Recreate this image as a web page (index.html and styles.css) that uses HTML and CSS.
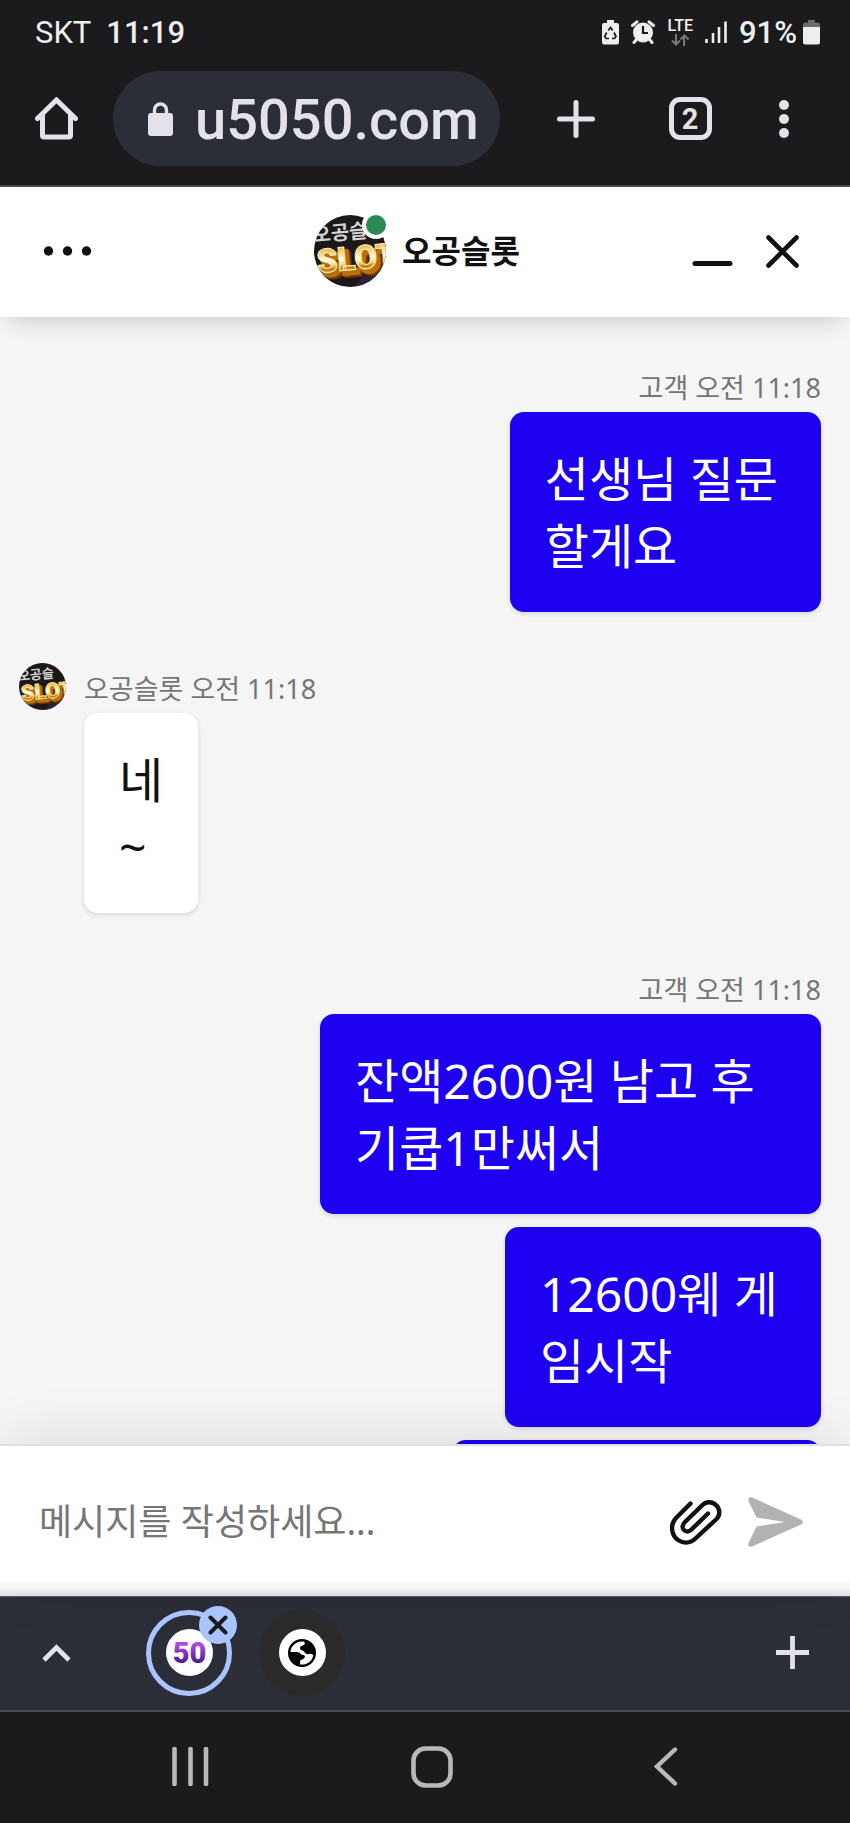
FILE: index.html
```html
<!DOCTYPE html>
<html lang="ko">
<head>
<meta charset="utf-8">
<meta name="viewport" content="width=device-width, initial-scale=1">
<title>오공슬롯</title>
<link rel="stylesheet" href="styles.css">
</head>
<body>
<div class="screen">
  <header class="status">
    <div class="status-left"><span>SKT</span><span class="status-strong">11:19</span></div>
    <div class="status-right">
      <svg width="17" height="25" viewBox="0 0 17 25" aria-hidden="true">
        <path d="M5 0h7v3h3q2 0 2 2v17q0 2.500-2 2.500H2q-2 0-2-2.500V5q0-2 2-2h3z" fill="#eee"/>
        <path d="M6.300 10.500 8.500 7.500l2.200 3M12 12.500l2 4-1.500 2H10M7 18.500H4l-1.300-2 2-4" fill="none" stroke="#1b1b1d" stroke-width="1.700"/>
      </svg>
      <svg width="24" height="24" viewBox="0 0 24 24" aria-hidden="true">
        <circle cx="12" cy="12.500" r="10" fill="#eee"/>
        <path d="M1.500 5.500 6 1.800M22.500 5.500 18 1.800M5 20l-2 2.500M19 20l2 2.500" stroke="#eee" stroke-width="3" stroke-linecap="round"/>
        <path d="M12 6v7h5" fill="none" stroke="#1b1b1d" stroke-width="2.200"/>
      </svg>
      <div class="network">
        <span class="lte">LTE</span>
        <svg width="18" height="12" viewBox="0 0 18 12" aria-hidden="true">
          <path d="M5 0v10M1 6.500l4 4 4-4M13 12V2M9.500 5.500l4-4 4 4" fill="none" stroke="#77777a" stroke-width="2"/>
        </svg>
      </div>
      <svg width="22" height="24" viewBox="0 0 22 24" aria-hidden="true">
        <path d="M1.500 19v4M8 13v10M14 7v16M20.500 1.500V23" stroke="#eee" stroke-width="2.600"/>
      </svg>
      <span class="status-strong">91%</span>
      <svg class="battery" width="17" height="25" viewBox="0 0 17 25" aria-hidden="true">
        <path d="M5 0h7v2.500h3q2 0 2 2V8H0V4.500q0-2 2-2h3z" fill="#6b6b6d"/>
        <path d="M0 7h17v15q0 2.500-2 2.500H2q-2 0-2-2.500z" fill="#eee"/>
      </svg>
    </div>
  </header>

  <nav class="toolbar" aria-label="브라우저">
    <button class="icon-btn home" aria-label="홈">
      <svg width="43" height="43" viewBox="0 0 43 43" fill="none" stroke="#e4e2e9" stroke-width="5" stroke-linejoin="round" stroke-linecap="round">
        <path d="M7.500 19v19.500q0 1.500 1.500 1.500h25q1.500 0 1.500-1.500V19"/>
        <path d="M2.500 21.500 21.500 3l19 18.500" stroke-linejoin="miter"/>
      </svg>
    </button>
    <div class="address">
      <svg width="25" height="34" viewBox="0 0 25 34" aria-hidden="true">
        <path d="M6.500 13V8a6 6 0 0 1 12 0v5" fill="none" stroke="#e4e2e9" stroke-width="3.400"/>
        <rect y="11" width="25" height="23" rx="3" fill="#e4e2e9"/>
      </svg>
      <input class="address-input" type="text" value="u5050.com" aria-label="주소">
    </div>
    <button class="icon-btn tool" aria-label="새 탭">
      <svg width="38" height="38" viewBox="0 0 38 38" stroke="#e4e2e9" stroke-width="5" stroke-linecap="round"><path d="M19 2.500v33M2.500 19h33"/></svg>
    </button>
    <button class="icon-btn tool" aria-label="탭 2개"><span class="tab-count">2</span></button>
    <button class="icon-btn more" aria-label="더보기">
      <svg width="10" height="38" viewBox="0 0 10 38" fill="#e4e2e9"><circle cx="5" cy="5" r="5"/><circle cx="5" cy="19" r="5"/><circle cx="5" cy="33" r="5"/></svg>
    </button>
  </nav>

  <svg class="defs" width="0" height="0" aria-hidden="true">
    <defs>
      <linearGradient id="gold" x1="0" y1="0" x2="0" y2="1">
        <stop offset=".2" stop-color="#f0b848"/><stop offset=".5" stop-color="#fffbe6"/><stop offset=".62" stop-color="#f9dc8c"/><stop offset=".74" stop-color="#c27a12"/><stop offset=".86" stop-color="#ffe28a"/>
      </linearGradient>
      <clipPath id="disc"><circle cx="36" cy="36" r="36"/></clipPath>
      <symbol id="logo" viewBox="0 0 72 72">
        <g clip-path="url(#disc)">
          <rect width="72" height="72" fill="#1c1719"/>
          <path d="M48 62 72 50v22H40z" fill="#302236"/>
          <g transform="rotate(-5 36 36)">
            <text x="0" y="24" class="logo-small">오공슬</text>
            <text x="7" y="61" class="logo-shade">SLOT</text>
            <text x="5" y="59" class="logo-shade light">SLOT</text>
            <text x="2" y="55" class="logo-big">SLOT</text>
          </g>
        </g>
      </symbol>
    </defs>
  </svg>

  <main class="chat">
    <header class="chat-header">
      <button class="icon-btn menu" aria-label="메뉴">
        <svg width="50" height="10" viewBox="0 0 50 10" fill="#111"><circle cx="5.500" cy="5" r="4.700"/><circle cx="24.500" cy="5" r="4.700"/><circle cx="43.500" cy="5" r="4.700"/></svg>
      </button>
      <div class="brand">
        <div class="avatar">
          <svg width="72" height="72"><use href="#logo"/></svg>
          <span class="online"></span>
        </div>
        <h1 class="brand-name">오공슬롯</h1>
      </div>
      <div class="window-actions">
        <button class="icon-btn" aria-label="최소화">
          <svg width="41" height="33" viewBox="0 0 41 33"><path d="M3 28.500h35" stroke="#111" stroke-width="5" stroke-linecap="round"/></svg>
        </button>
        <button class="icon-btn" aria-label="닫기">
          <svg width="33" height="33" viewBox="0 0 33 33"><path d="M2.500 2.500l28 28M30.500 2.500l-28 28" stroke="#111" stroke-width="4.600" stroke-linecap="round"/></svg>
        </button>
      </div>
    </header>

    <section class="thread" aria-label="대화">
      <article class="group sent">
        <p class="meta">고객 오전 11:18</p>
        <p class="bubble">선생님 질문<br>할게요</p>
      </article>
      <article class="group received">
        <svg class="sender" width="47" height="47"><use href="#logo"/></svg>
        <div class="received-body">
          <p class="meta">오공슬롯 오전 11:18</p>
          <p class="bubble">네<br>~</p>
        </div>
      </article>
      <article class="group sent">
        <p class="meta">고객 오전 11:18</p>
        <p class="bubble">잔액2600원 남고 후기쿱1만써서</p>
        <p class="bubble">12600웨 게<br>임시작</p>
        <p class="bubble upcoming"></p>
      </article>
    </section>

    <form class="composer">
      <input class="message" type="text" placeholder="메시지를 작성하세요..." aria-label="메시지">
      <button class="icon-btn" type="button" aria-label="파일 첨부">
        <svg width="52" height="46" viewBox="0 0 52 46" fill="none" stroke="#111" stroke-width="4.400" stroke-linecap="round" stroke-linejoin="round">
          <path d="M20.500 4.500 6.500 18.500C-1 26 2 37 8 41c6 4 13 3 18-2L46.500 20c4-4 3.500-10 0-13.500-4-4-10-4.500-14-.5L15 23c-3 3-3 6-1 8s5 2 7.500-.5L38 14.500"/>
        </svg>
      </button>
      <button class="icon-btn send" type="button" aria-label="보내기">
        <svg width="55" height="50" viewBox="0 0 55 50"><path d="M4 .4 53 22.500q4 2.500 0 5L4 49.600Q-.5 50.500.5 46L8.500 29.500 37 25 8.500 20.500.5 4Q-.5-.5 4 .4z" fill="#b2b2b2"/></svg>
      </button>
    </form>
  </main>

  <nav class="tabs" aria-label="탭 그룹">
    <button class="icon-btn caret" aria-label="펼치기">
      <svg width="29" height="18" viewBox="0 0 29 18"><path d="M2 16 14.500 3.500 27 16" fill="none" stroke="#e4e2e9" stroke-width="4.600"/></svg>
    </button>
    <button class="icon-btn tab active" aria-label="탭 50 닫기">
      <span class="favicon">
        <svg width="47" height="47" viewBox="0 0 47 47">
          <defs><linearGradient id="violet" x1="0" y1="0" x2="0" y2="1"><stop offset=".25" stop-color="#b34be0"/><stop offset=".85" stop-color="#3f1480"/></linearGradient></defs>
          <text x="23.500" y="34" text-anchor="middle" class="fifty">50</text>
        </svg>
      </span>
      <span class="badge">
        <svg width="20" height="20" viewBox="0 0 20 20"><path d="M2.500 2.500l15 15M17.500 2.500l-15 15" stroke="#1b1b1d" stroke-width="4" stroke-linecap="round"/></svg>
      </span>
    </button>
    <button class="icon-btn tab" aria-label="웹페이지">
      <span class="favicon">
        <svg width="28" height="28" viewBox="0 0 28 28">
          <circle cx="14" cy="14" r="12.800" fill="#fff" stroke="#000" stroke-width="2.400"/>
          <path d="M17 1.500c-1 2.500.5 3-1 4.500-2 1-4 1-4 3 0 2.500 3 2 4 3.500 1 2 3 3 5 2.500 2-1 3 1 5.500 1.500C28 8 24 2.500 17 1.500zM1.500 13H9c3 0 3 2.500 6 3 2 0 2.500 2 1 3.500-2 1.500-4 1-4 3.500 0 2 .5 2.500-1 3.500C5 25 1.500 20 1.500 13z" fill="#000"/>
        </svg>
      </span>
    </button>
    <button class="icon-btn add" aria-label="추가">
      <svg width="33" height="33" viewBox="0 0 33 33"><path d="M16.500 0v33M0 16.500h33" stroke="#e4e2e9" stroke-width="4.800"/></svg>
    </button>
  </nav>

  <footer class="system">
    <button class="icon-btn" aria-label="최근 앱">
      <svg width="37" height="39" viewBox="0 0 37 39"><path d="M2.500 2v35M18.500 2v35M34 2v35" stroke="#b9b9b9" stroke-width="4.600" stroke-linecap="round"/></svg>
    </button>
    <button class="icon-btn" aria-label="홈 화면">
      <svg width="42" height="42" viewBox="0 0 42 42"><rect x="2.500" y="2.500" width="37" height="37" rx="12" fill="none" stroke="#b9b9b9" stroke-width="4.600"/></svg>
    </button>
    <button class="icon-btn" aria-label="뒤로">
      <svg width="24" height="39" viewBox="0 0 24 39"><path d="M21 2.500 3 19.500l18 17" fill="none" stroke="#b9b9b9" stroke-width="4.400" stroke-linecap="round"/></svg>
    </button>
  </footer>
</div>
</body>
</html>
```
FILE: styles.css
```css
* { box-sizing: border-box; }

body {
  margin: 0;
  background: #1b1b1d;
  font-family: "Noto Sans", "Noto Sans CJK KR", sans-serif;
}

svg { display: block; flex: none; }
.defs { position: absolute; }

.screen {
  display: flex;
  flex-direction: column;
  height: 100vh;
}

.icon-btn {
  display: flex;
  align-items: center;
  justify-content: center;
  padding: 0;
  border: 0;
  background: none;
  color: inherit;
  font: inherit;
}

/* Phone status bar */
.status {
  display: flex;
  justify-content: space-between;
  align-items: center;
  height: 64px;
  padding: 0 30px 0 35px;
  color: #eee;
  font: 31px Roboto, sans-serif;
}
.status-left { display: flex; gap: 15px; }
.status-strong { font-weight: 500; }
.status-right { display: flex; align-items: center; gap: 12px; }
.battery { margin-left: -6px; }
.network {
  display: flex;
  flex-direction: column;
  align-items: center;
  gap: 1px;
}
.lte { font-size: 16px; font-weight: 500; line-height: 14px; }

/* Browser toolbar */
.toolbar {
  display: flex;
  align-items: center;
  padding: 7px 29px 19px 35px;
  border-bottom: 2px solid #48484e;
  color: #e4e2e9;
  font-family: Roboto, sans-serif;
}
.home { margin-right: 35px; }
.address {
  display: flex;
  flex: 1;
  align-items: center;
  gap: 22px;
  min-width: 0;
  height: 95px;
  margin-right: 19px;
  padding-left: 35px;
  border-radius: 48px;
  background: #2b2d37;
}
.address-input {
  flex: 1;
  min-width: 0;
  padding: 3px 0 0;
  border: 0;
  outline: 0;
  background: none;
  color: #e4e2e9;
  font: 500 56px Roboto, sans-serif;
}
.tool { width: 114px; }
.more { width: 74px; }
.tab-count {
  width: 43px;
  height: 43px;
  border: 5px solid #e4e2e9;
  border-radius: 11px;
  font-size: 29px;
  font-weight: 700;
  line-height: 34px;
}

/* Chat widget */
.chat {
  display: flex;
  flex: 1;
  flex-direction: column;
  min-height: 0;
  background: #f5f5f5;
}
.chat-header {
  position: relative;
  z-index: 1;
  display: grid;
  grid-template-columns: 1fr auto 1fr;
  align-items: center;
  height: 130px;
  padding: 0 51px 2px 43px;
  background: #fff;
  box-shadow: 0 12px 24px -10px rgba(0, 0, 0, .2);
}
.menu { justify-self: start; }
.brand { display: flex; align-items: center; gap: 16px; padding-right: 8px; }
.avatar { position: relative; }
.online {
  position: absolute;
  top: -4px;
  right: -4px;
  width: 28px;
  height: 28px;
  border: 4px solid #fff;
  border-radius: 50%;
  background: #2b8a54;
}
.brand-name {
  margin: 0;
  color: #111;
  font-size: 32px;
  font-weight: 700;
  line-height: 44px;
}
.window-actions { display: flex; justify-content: flex-end; gap: 33px; }

.logo-small { fill: #d4d4d6; font: 700 20px "Noto Sans CJK KR", sans-serif; }
.logo-big, .logo-shade { font: 900 33px Roboto, sans-serif; }
.logo-big { fill: url(#gold); stroke: #fff0b0; stroke-width: 1px; }
.logo-shade { fill: #6b3505; stroke: #6b3505; stroke-width: 3px; }
.logo-shade.light { fill: #b86f10; stroke: #b86f10; }

.thread {
  display: flex;
  flex: 1;
  flex-direction: column;
  gap: 51px;
  min-height: 0;
  padding: 45px 29px 0 19px;
  overflow: hidden;
}
.group { display: flex; flex: none; }
.sent { flex-direction: column; align-items: flex-end; }
.received { align-items: flex-start; gap: 18px; }
.meta {
  margin: 0;
  padding: 4px 0 2px;
  color: #757575;
  font-size: 27px;
  line-height: 44px;
}
.bubble {
  width: fit-content;
  margin: 0;
  padding: 33px 35px;
  border-radius: 14px;
  background: #fff;
  box-shadow: 0 2px 5px rgba(0, 0, 0, .12);
  color: #111;
  font-size: 48px;
  line-height: 67px;
}
.sent .bubble {
  max-width: 501px;
  padding-right: 43px;
  background: #1e00f0;
  color: #fff;
  word-break: break-all;
}
.bubble + .bubble { margin-top: 13px; }
.sent .upcoming { width: 46%; height: 200px; }

.composer {
  position: relative;
  display: flex;
  align-items: center;
  height: 152px;
  padding: 2px 47px 0 39px;
  border-top: 2px solid #e0e0e0;
  background: linear-gradient(#fff 89%, #f4f4f4 95%, #dcdcdc);
  box-shadow: 0 -10px 60px -6px rgba(0, 0, 0, .1);
}
.message {
  flex: 1;
  min-width: 0;
  padding: 0;
  border: 0;
  outline: 0;
  background: none;
  color: #111;
  font-family: inherit;
  font-size: 36px;
  line-height: 54px;
}
.message::placeholder { color: #767676; opacity: 1; }
.send { margin-left: 26px; }

/* Tab strip */
.tabs {
  display: flex;
  align-items: center;
  height: 116px;
  padding: 0 41px 2px 42px;
  border-top: 1px solid #5c5e66;
  border-bottom: 2px solid #484a54;
  background: #2b2d37;
}
.tab {
  position: relative;
  width: 86px;
  height: 86px;
  margin-left: 27px;
  border-radius: 50%;
  background: #2a2a2a;
}
.tab.active {
  margin-left: 75px;
  border: 5px solid #a9c4ff;
  background: none;
}
.favicon {
  display: flex;
  align-items: center;
  justify-content: center;
  width: 47px;
  height: 47px;
  border-radius: 50%;
  background: #fff;
}
.fifty { fill: url(#violet); font: 900 29px Roboto, sans-serif; }
.badge {
  position: absolute;
  top: -9px;
  right: -10px;
  display: flex;
  align-items: center;
  justify-content: center;
  width: 38px;
  height: 38px;
  border-radius: 50%;
  background: #a9c4ff;
}
.add { margin-left: auto; }

/* Android navigation */
.system {
  display: flex;
  align-items: center;
  justify-content: space-between;
  height: 111px;
  padding: 0 172px 2px;
}
```
